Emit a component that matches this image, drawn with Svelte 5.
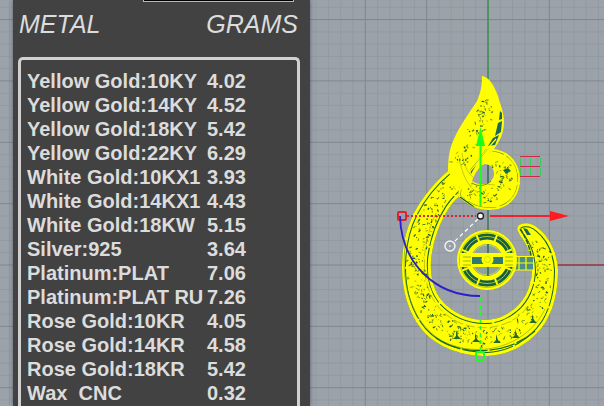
<script>
const metals = [
	{ name: "Yellow Gold:10KY", grams: "4.02" },
	{ name: "Yellow Gold:14KY", grams: "4.52" },
	{ name: "Yellow Gold:18KY", grams: "5.42" },
	{ name: "Yellow Gold:22KY", grams: "6.29" },
	{ name: "White Gold:10KX1", grams: "3.93" },
	{ name: "White Gold:14KX1", grams: "4.43" },
	{ name: "White Gold:18KW", grams: "5.15" },
	{ name: "Silver:925", grams: "3.64" },
	{ name: "Platinum:PLAT", grams: "7.06" },
	{ name: "Platinum:PLAT RU", grams: "7.26" },
	{ name: "Rose Gold:10KR", grams: "4.05" },
	{ name: "Rose Gold:14KR", grams: "4.58" },
	{ name: "Rose Gold:18KR", grams: "5.42" },
	{ name: "Wax  CNC", grams: "0.32" },
];

let size = $state("");

// grid lines, every fifth one is a major line
const step = 12.27;
const lines = [];
for (let i = -40; i <= 12; i++) {
	lines.push({ x: 488 + i * step, y: 265 + i * step, major: i % 5 === 0 });
}
lines.sort((a, b) => a.major - b.major);

const hook =
	"M448 171C436 181 423 196 414 213C406 229 402 246 402 268C402 290 408 313 423 331C438 348 463 356 487 356C510 355 532 343 545 323C554 308 558 291 558 270C557 253 550 238 539 229C534 224 526 221 519 225C516 228 518 233 522 238C530 249 532 260 532 272C531 289 523 304 510 312C503 317 494 320 485 320C468 320 453 313 442 301C433 290 430 275 431 260C433 240 440 222 449 208C453 202 457 198 460 195L470 185L455 168Z";
const leaf =
	"M482 76C489 77 494 85 498 96C500 104 504 112 504 122C504 134 499 142 494 149L470 176L462 190L448 172C448 160 449 149 454 139C460 125 470 112 477 101C481 92 482 85 482 76Z";
const loop =
	"M474 152C480 149 488 148 494 149C510 151 520 164 520 179C520 198 507 210 489 210C477 210 466 204 458 196L462 170Z";

// small repeatable generator so the mesh looks the same on every load
let seed = 7;
function rand() {
	seed = (seed * 16807) % 2147483647;
	return seed / 2147483647;
}

const colors = ["#255c2c", "#4f7a16", "#7d9a10", "#186048"];

function scatter(points, count, spread) {
	const marks = [];
	for (let i = 0; i < points.length - 1; i++) {
		const [x1, y1] = points[i];
		const [x2, y2] = points[i + 1];
		const len = Math.hypot(x2 - x1, y2 - y1);
		for (let k = 0; k < count; k++) {
			const t = rand();
			const off = (rand() * 2 - 1) * spread;
			const x = x1 + (x2 - x1) * t - ((y2 - y1) / len) * off;
			const y = y1 + (y2 - y1) * t + ((x2 - x1) / len) * off;
			const a = rand() * Math.PI;
			const l = 0.7 + rand() * 2.4;
			marks.push({
				d: `M${x} ${y}l${Math.cos(a) * l} ${Math.sin(a) * l}`,
				w: 0.5 + rand() * 0.9,
				color: colors[Math.floor(rand() * colors.length)],
			});
		}
	}
	return marks;
}

const mesh = [
	...scatter([[450, 184], [430, 212], [419, 240], [416, 270], [422, 298], [437, 320], [460, 334], [486, 339]], 36, 9),
	...scatter([[486, 337], [514, 329], [535, 309], [544, 283], [544, 260], [536, 240]], 26, 8),
	...scatter([[488, 99], [484, 118], [468, 142], [458, 166]], 24, 8),
	...scatter([[466, 188], [484, 198], [503, 189], [508, 173], [496, 160]], 20, 7),
];

const flames = [[456, 335], [475, 338], [496, 339], [515, 334], [532, 319]];
const spokes = [0, 45, 90, 135, 180, 225, 270, 315];
</script>

<main>
	<svg class="viewport" viewBox="0 0 604 406" preserveAspectRatio="xMidYMid slice" role="img" aria-label="Pendant">
		<defs>
			<clipPath id="hook-clip"><path d={hook} /></clipPath>
			<clipPath id="loop-clip"><path d={loop} /></clipPath>
		</defs>

		{#each lines as line}
			<path class={line.major ? "major" : "minor"} d="M{line.x} -300V900M-400 {line.y}H1200" />
		{/each}

		<path d="M488 -300V265" stroke="#419453" stroke-width="1.6" />
		<path d="M488 204V232" stroke="#55826b" stroke-width="2" />
		<path d="M488 265H1200" stroke="#963942" stroke-width="1.4" />

		<!-- pendant body -->
		<path d={hook} fill="#ffff00" />
		<g clip-path="url(#hook-clip)" fill="none">
			<path d={hook} stroke="#17602b" stroke-width="8" stroke-dasharray="54 2" />
			<path d={hook} stroke="#ffff00" stroke-width="6" />
			<path d="M406 240C398 288 416 331 449 344C487 359 530 342 545 309" stroke="#7a9b16" stroke-width="0.6" />
			<path d="M436 213C418 252 420 296 448 316C475 336 513 329 529 305" stroke="#939d10" stroke-width="0.6" stroke-dasharray="9 3" />
			<path d="M436 338C460 355 505 357 535 331" stroke="#176b24" stroke-width="1.2" stroke-dasharray="26 2" />
		</g>
		<path d={loop} fill="#ffff00" />
		<g clip-path="url(#loop-clip)" fill="none">
			<path d={loop} stroke="#6d8c18" stroke-width="5" stroke-dasharray="32 3" />
			<path d={loop} stroke="#ffff00" stroke-width="4" />
			<path d="M460 197L474 207M461 201L469 206" stroke="#17602b" stroke-width="1.3" />
		</g>
		<path d={leaf} fill="#ffff00" />
		{#each mesh as m}
			<path d={m.d} stroke={m.color} stroke-width={m.w} />
		{/each}
		{#each flames as [x, y]}
			<path d="M{x} {y - 5}l2 6l3 3h-8l3 -3z" fill="#246c2c" />
		{/each}
		<g fill="#19665a">
			<path d="M500 111L502 113L502 119L499 120Z" />
			<path d="M498 123L502 121L501 132L495 136Z" />
			<path d="M493 138L499 135L495 145L488 146Z" />
			<path d="M470 169L486 149L490 148L479 160L471 174Z" />
			<path d="M503 170L508 168L511 171L506 174Z" />
			<path d="M523 228L527 229L531 235L527 235Z" />
		</g>
		<path d="M468 171L496 139M466 176L491 147M473 172L488 151" stroke="#ffff00" stroke-width="1.2" />
		<path d="M459 159C463 174 466 185 478 193M462 153C465 174 475 184 495 185" fill="none" stroke="#9cab12" stroke-width="0.6" />
		<path d="M520 229C529 242 532 255 532 267" fill="none" stroke="#255c2c" stroke-width="1.5" stroke-dasharray="5 1" />

		<path d="M472 181C476 184 480 184 484 184C490 183 494 179 494 174C494 168 490 164 485 164C480 165 475 173 472 181Z" fill="#9ba2a9" />
		<path d="M488 165V183" stroke="#477a66" stroke-width="2" />
		<path d="M472 183C478 187 486 186 491 181" fill="none" stroke="#576b18" stroke-width="0.8" />

		<!-- bail bar -->
		<rect x="516" y="256" width="17" height="14" fill="#4b8f87" />
		<path d="M514 256.500H534M514 263H534M514 270H534M519 256V270M526 256V270" stroke="#ffff00" stroke-width="1.2" />

		<!-- stone setting -->
		<circle cx="487" cy="260" r="30" fill="#ffff00" />
		<circle cx="487" cy="260" r="23.500" fill="none" stroke="#176047" stroke-width="6" />
		<circle cx="487" cy="260" r="23.500" fill="none" stroke="#c9e312" stroke-width="0.8" />
		<circle cx="487" cy="260" r="27.500" fill="none" stroke="#6f921a" stroke-width="0.5" />
		<circle cx="487" cy="260" r="17" fill="#8fa29d" stroke="#ffff00" stroke-width="2" />
		<circle cx="487" cy="260" r="15" fill="none" stroke="#d6dc38" stroke-width="0.8" />
		<path d="M488 244V276" stroke="#427a62" stroke-width="2" />
		{#each spokes as angle}
			<path d="M503 260H514" stroke="#ffff00" stroke-width="2" transform="rotate({angle + 22} 487 260)" />
		{/each}
		<rect x="460" y="253" width="55" height="14" fill="#ffff00" />
		<rect x="472" y="257" width="31" height="7" fill="#2e7c70" />
		<path d="M463 257H471M463 261H471M463 265H471M505 257H513M505 261H513M505 265H513" stroke="#8ba416" stroke-width="0.8" />
		<circle cx="487.500" cy="259.500" r="6" fill="#ffff00" />
		<circle cx="487.500" cy="259.500" r="3" fill="none" stroke="#c4dc12" stroke-width="0.8" />

		<!-- small grips -->
		<path d="M520.500 158V176M530.500 158V176M540.500 158V176" stroke="#35cf55" stroke-width="1" stroke-dasharray="8 2" />
		<path d="M520 156.500H540M520 166.500H540M520 176.500H540" stroke="#cf2846" stroke-width="1" />

		<!-- gumball -->
		<path d="M480.500 144V206" stroke="#1aff1a" stroke-width="2" />
		<path d="M480.500 127L485 146H476Z" fill="#1aff1a" />
		<path d="M480.500 298V352" stroke="#2cf62c" stroke-width="1.500" stroke-dasharray="4 3" />
		<rect x="476" y="352" width="8" height="8" rx="2" fill="none" stroke="#1aff1a" stroke-width="2" />
		<path d="M490 216H552" stroke="#ee242b" stroke-width="1.800" />
		<path d="M550 211L569 216L550 221Z" fill="#ff1c20" />
		<path d="M407 216H476" stroke="#dd2430" stroke-width="1.800" stroke-dasharray="2 2" />
		<rect x="398" y="212" width="8" height="8" rx="1" fill="none" stroke="#e3202b" stroke-width="2" />
		<path d="M400 216C401 262 434 296 480 296" fill="none" stroke="#2a20c8" stroke-width="1.800" />
		<path d="M478 219L453 243" stroke="#ffffff" stroke-width="1.200" stroke-dasharray="4 3" />
		<circle cx="450" cy="246" r="5" fill="none" stroke="#f4f4f6" stroke-width="1.400" />
		<circle cx="450" cy="246" r="0.800" fill="#ffffff" />
		<circle cx="480.500" cy="216" r="3" fill="#ffffff" stroke="#222222" stroke-width="1.400" />
	</svg>

	<section class="panel">
		<input class="size" type="text" aria-labelledby="metal-head" bind:value={size} />
		<header>
			<span id="metal-head">METAL</span>
			<span>GRAMS</span>
		</header>
		<div class="list">
			<table>
				<tbody>
					{#each metals as metal}
						<tr>
							<td class="name">{metal.name}</td>
							<td>{metal.grams}</td>
						</tr>
					{/each}
				</tbody>
			</table>
		</div>
	</section>
</main>

<style>
	:global(body) {
		margin: 0;
		background: #9ba2a9;
	}

	main {
		display: grid;
		grid-template-rows: 100vh;
		grid-template-columns: 100%;
		overflow: hidden;
		font-family: "Liberation Sans", Arial, sans-serif;
		color: #dcdcdc;
	}

	.viewport {
		grid-area: 1 / 1;
		display: block;
		width: 100%;
		height: 100%;
		background: #9ba2a9;
	}

	.minor {
		stroke: #929aa2;
		stroke-width: 1;
	}

	.major {
		stroke: #7f868d;
		stroke-width: 1;
	}

	.panel {
		grid-area: 1 / 1;
		z-index: 1;
		display: flex;
		flex-direction: column;
		justify-self: start;
		box-sizing: border-box;
		min-width: 297px;
		margin-left: 13px;
		padding: 0 10px 0 5px;
		overflow: hidden;
		background: #424242;
		box-shadow: 0 0 4px rgba(50, 55, 60, 0.6);
	}

	.size {
		flex: none;
		align-self: flex-end;
		box-sizing: border-box;
		width: 151px;
		height: 24px;
		margin: -22px 6px 0 0;
		border: 1px solid #b8b8b8;
		background: #000;
		color: #dcdcdc;
		font: inherit;
	}

	header {
		display: flex;
		flex: none;
		justify-content: space-between;
		padding: 8px 2px 19px 1px;
		font-size: 25px;
		font-style: italic;
		line-height: 28px;
	}

	.list {
		flex: 1 0 auto;
		padding: 9px 6px;
		border: 3px solid #d2d0d0;
		border-bottom: 0;
		border-radius: 5px 5px 0 0;
	}

	table {
		border-collapse: collapse;
		font-size: 20px;
		font-weight: bold;
		line-height: 24px;
	}

	td {
		padding: 0;
		white-space: pre;
	}

	.name {
		min-width: 180px;
	}
</style>
